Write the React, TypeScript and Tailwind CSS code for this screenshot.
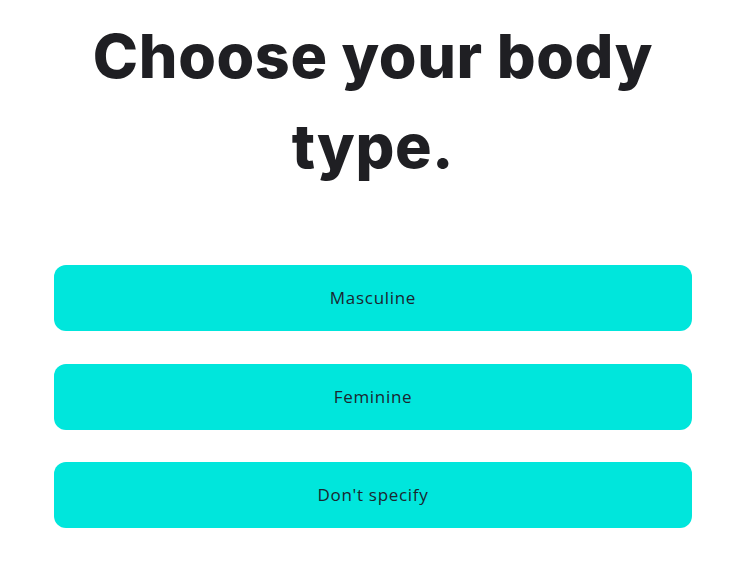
export default function App() {
  const options = ['Masculine', 'Feminine', "Don't specify"];

  return (
    <div className="min-h-[572px] w-full bg-white" style={{ fontFamily: 'Inter, "Noto Sans", sans-serif' }}>
      <div className="pl-[54px] pr-[49px] pt-[11px]">
        <h1 className="text-center text-[61px] leading-[90px] font-extrabold tracking-[0.6px] text-[#1f1f23]">
          Choose your body type.
        </h1>

        <div className="mt-[74px] flex flex-col gap-[32.5px]">
          {options.map((o) => (
            <button
              key={o}
              className="h-[66px] w-full rounded-[12px] bg-[#00e6dc] text-[17px] tracking-[0.7px] text-[#1b2630]"
              style={{ fontFamily: '"Open Sans", sans-serif' }}
            >
              {o}
            </button>
          ))}
        </div>
      </div>
    </div>
  );
}
